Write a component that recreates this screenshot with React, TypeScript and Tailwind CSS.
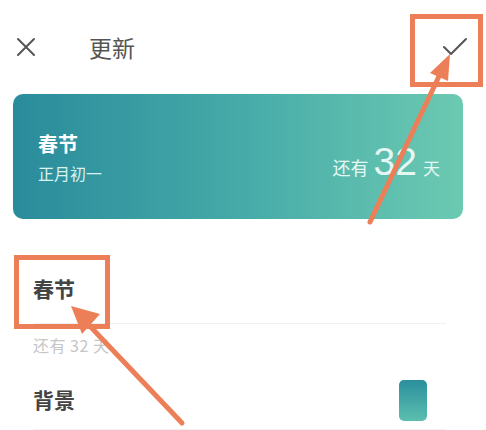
const ORANGE = '#ec7f57';

const Annotations = () => (
  <svg
    className="pointer-events-none absolute left-0 top-0"
    width={486}
    height={430}
    viewBox="0 0 486 430"
  >
    {/* box round the check */}
    <rect x={412.5} y={16.5} width={68} height={68} fill="none" stroke={ORANGE} strokeWidth={5} />
    {/* box round the name */}
    <rect x={16.5} y={257.5} width={91} height={69} fill="none" stroke={ORANGE} strokeWidth={5} />
    {/* arrow up to the check */}
    <line x1={370} y1={222} x2={442} y2={70} stroke={ORANGE} strokeWidth={5} strokeLinecap="round" />
    <polygon points="450,54 448,81 430,73" fill={ORANGE} />
    {/* arrow up to the name */}
    <line x1={182} y1={423} x2={86} y2={322} stroke={ORANGE} strokeWidth={5} strokeLinecap="round" />
    <polygon points="71,306 100,314 82,334" fill={ORANGE} />
  </svg>
);

export default function App() {
  return (
    <div
      className="relative h-[430px] w-[486px] overflow-hidden bg-white px-[13px]"
      style={{ fontFamily: '"Noto Sans CJK SC", "Noto Sans", sans-serif' }}
    >
      {/* Header */}
      <div className="flex h-[94px] items-center">
        <svg width={20} height={20} viewBox="0 0 20 20" className="ml-[3px]">
          <path d="M2 2 L18 18 M18 2 L2 18" stroke="#555" strokeWidth={2} strokeLinecap="round" />
        </svg>
        <span className="ml-[53px] text-[23px] leading-none text-[#555]">更新</span>
        <svg width={26} height={20} viewBox="0 0 26 20" className="ml-auto mr-[6px]">
          <path d="M3 10 L10 17 L25 2" stroke="#555" strokeWidth={2} fill="none" strokeLinecap="round" strokeLinejoin="round" />
        </svg>
      </div>

      {/* Card */}
      <div className="mr-[10px] flex h-[125px] items-center justify-between rounded-[10px] bg-gradient-to-r from-[#2a8b9b] via-[#45aaa8] to-[#6ccab2] pl-[25px] pr-[23px]">
        <div className="flex flex-col">
          <span className="text-[20px] font-bold leading-[28px] text-white">春节</span>
          <span className="mt-[5px] text-[16px] leading-[20px] text-[#d9f3ee]">正月初一</span>
        </div>
        <div className="mt-[10px] flex items-baseline text-[#e6f7f3]">
          <span className="text-[18px]">还有</span>
          <span
            className="ml-[5px] text-[39px] font-light leading-none"
            style={{ fontFamily: '"Liberation Sans", Arial, sans-serif' }}
          >
            32
          </span>
          <span className="ml-[6px] text-[17px]">天</span>
        </div>
      </div>

      {/* Form */}
      <div className="ml-[20px] mr-[27px]">
        <div className="border-b border-[#f0f0f0] pb-[21px] pt-[55px]">
          <span className="text-[21px] font-bold leading-[28px] text-[#444]">春节</span>
        </div>
        <div className="mt-[11px] text-[16px] leading-[20px] tracking-[0.5px] text-[#c6c6c6]">
          还有 32 天
        </div>
        <div className="mt-[16px] flex h-[59px] items-center justify-between border-b border-[#f0f0f0]">
          <span className="text-[21px] font-bold text-[#444]">背景</span>
          <div className="mr-[19px] h-[41px] w-[28px] rounded-[5px] bg-gradient-to-b from-[#2a8f9d] to-[#5cbfae]" />
        </div>
      </div>

      <Annotations />
    </div>
  );
}
